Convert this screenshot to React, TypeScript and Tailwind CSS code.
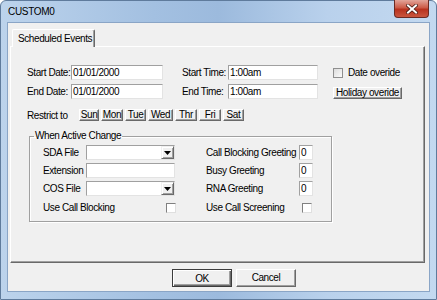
import React from 'react';

// classic Win dialog pieces
function Edit({ className, value }: { className: string; value?: string }) {
  return (
    <div
      className={`${className} h-[15px] shrink-0 bg-white border border-t-[#a0a0a0] border-l-[#a0a0a0] border-r-[#e3e3e3] border-b-[#e3e3e3] pl-[1px] leading-[13px] whitespace-nowrap overflow-hidden`}
    >
      {value}
    </div>
  );
}

function Combo({ className }: { className: string }) {
  return (
    <div
      className={`${className} h-[15px] shrink-0 bg-white border border-t-[#a0a0a0] border-l-[#a0a0a0] border-r-[#e3e3e3] border-b-[#e3e3e3] flex justify-end`}
    >
      <div className="w-[13px] h-full bg-[#f0f0f0] border border-t-[#f0f0f0] border-l-[#f0f0f0] border-r-[#696969] border-b-[#696969] shadow-[inset_1px_1px_0_#fff,inset_-1px_-1px_0_#a0a0a0] flex items-center justify-center">
        <svg width="7" height="4" viewBox="0 0 7 4">
          <path d="M0 0h7L3.5 4z" fill="#000" />
        </svg>
      </div>
    </div>
  );
}

function Check() {
  return (
    <div className="w-[10px] h-[10px] shrink-0 bg-white border border-t-[#808080] border-l-[#808080] border-r-[#dfdfdf] border-b-[#dfdfdf]" />
  );
}

function Btn({ className, children }: { className: string; children: React.ReactNode }) {
  return (
    <div
      className={`${className} shrink-0 flex items-center justify-center bg-[#f0f0f0] border border-t-white border-l-white border-r-[#696969] border-b-[#696969] shadow-[inset_-1px_-1px_0_#a0a0a0] leading-none whitespace-nowrap`}
    >
      {children}
    </div>
  );
}

export default function App() {
  return (
    <div className="w-[437px] h-[300px] flex flex-col rounded-t-[6px] border border-[#5f7b9c] bg-[linear-gradient(to_right,#bcd3ec,#a3c0e1_35%,#9cbadd_50%,#b9d1ec_75%,#c3d9f0)] px-[6px] pb-[7px] text-black font-['Liberation_Sans',Arial,sans-serif]">
      {/* title bar */}
      <div className="h-[21px] flex items-start justify-between shrink-0">
        <div className="ml-[1px] h-full flex items-center text-[10px] tracking-[-0.3px]">CUSTOM0</div>
        <div className="mr-[1px] -mt-px w-[35px] h-[18px] rounded-b-[4px] border border-t-0 border-[#6b2a23] bg-[linear-gradient(to_bottom,#e2a59a,#cc5b48_45%,#b8321f_55%,#c9563f)] flex items-center justify-center">
          <svg width="12" height="10" viewBox="0 0 12 10">
            <path d="M2 1.5l8 7M10 1.5l-8 7" stroke="#4a1a14" strokeWidth="3.6" strokeLinecap="square" />
            <path d="M2 1.5l8 7M10 1.5l-8 7" stroke="#fff" strokeWidth="2" strokeLinecap="square" />
          </svg>
        </div>
      </div>

      {/* client area */}
      <div className="flex-1 flex flex-col border border-[#8aa5c6] bg-[#f0f0f0] text-[10px] leading-[13px] tracking-[-0.4px]">
        {/* tab */}
        <div className="ml-[4px] mt-[6px] w-[83px] h-[18px] -mb-px relative z-10 bg-[#f0f0f0] rounded-t-[2px] border border-b-0 border-t-white border-l-white border-r-[#696969] shadow-[inset_-1px_0_0_#a0a0a0] pl-[5px] flex items-center whitespace-nowrap">
          Scheduled Events
        </div>

        {/* tab panel */}
        <div className="ml-[2px] w-[415px] h-[217px] border border-t-white border-l-white border-r-[#696969] border-b-[#696969] shadow-[inset_-1px_-1px_0_#a0a0a0] pt-[18px] pl-[16px]">
          <div className="h-[15px] flex items-center">
            <span className="w-[44px] shrink-0 whitespace-nowrap">Start Date:</span>
            <Edit className="w-[92px]" value="01/01/2000" />
            <span className="ml-[19px] w-[46px] shrink-0 whitespace-nowrap">Start Time:</span>
            <Edit className="w-[90px]" value="1:00am" />
            <div className="ml-[15px] w-[10px] h-[10px] shrink-0 border border-[#8f8f8f] bg-[linear-gradient(135deg,#dcdcdc,#fbfbfb)]" />
            <span className="ml-[5px] whitespace-nowrap">Date overide</span>
          </div>

          <div className="mt-[4px] h-[15px] flex items-center">
            <span className="w-[44px] shrink-0 whitespace-nowrap">End Date:</span>
            <Edit className="w-[92px]" value="01/01/2000" />
            <span className="ml-[19px] w-[46px] shrink-0 whitespace-nowrap">End Time:</span>
            <Edit className="w-[90px]" value="1:00am" />
            <Btn className="ml-[15px] mt-[3px] w-[69px] h-[12px]">Holiday overide</Btn>
          </div>

          <div className="mt-[10px] h-[12px] flex items-center">
            <span className="w-[52px] shrink-0 whitespace-nowrap">Restrict to</span>
            <div className="flex gap-[2px]">
              <Btn className="w-[20px] h-[12px]">Sun</Btn>
              <Btn className="w-[22px] h-[12px]">Mon</Btn>
              <Btn className="w-[21px] h-[12px]">Tue</Btn>
              <Btn className="w-[25px] h-[12px]">Wed</Btn>
              <Btn className="w-[22px] h-[12px]">Thr</Btn>
              <Btn className="w-[22px] h-[12px]">Fri</Btn>
              <Btn className="w-[21px] h-[12px]">Sat</Btn>
            </div>
          </div>

          {/* group box */}
          <fieldset className="ml-[2px] mt-[9px] w-[303px] border border-[#a0a0a0] shadow-[inset_1px_1px_0_#fff,1px_1px_0_#fff] pb-[6px]">
            <legend className="ml-[4px] px-[1px] leading-[12px]">When Active Change</legend>
            <div className="pl-[13px] mt-[3px] flex flex-col gap-[3px]">
              <div className="h-[15px] flex items-center">
                <span className="w-[43px] shrink-0">SDA File</span>
                <Combo className="w-[89px]" />
                <span className="ml-[31px] w-[93px] shrink-0 whitespace-nowrap">Call Blocking Greeting</span>
                <Edit className="w-[14px]" value="0" />
              </div>
              <div className="h-[15px] flex items-center">
                <span className="w-[43px] shrink-0">Extension</span>
                <Edit className="w-[89px]" />
                <span className="ml-[31px] w-[93px] shrink-0">Busy Greeting</span>
                <Edit className="w-[14px]" value="0" />
              </div>
              <div className="h-[15px] flex items-center">
                <span className="w-[43px] shrink-0">COS File</span>
                <Combo className="w-[89px]" />
                <span className="ml-[31px] w-[93px] shrink-0">RNA Greeting</span>
                <Edit className="w-[14px]" value="0" />
              </div>
              <div className="mt-[1px] h-[15px] flex items-center">
                <span className="w-[123px] shrink-0">Use Call Blocking</span>
                <Check />
                <span className="ml-[30px] w-[96px] shrink-0">Use Call Screening</span>
                <Check />
              </div>
            </div>
          </fieldset>
        </div>

        {/* dialog buttons */}
        <div className="mt-[6px] ml-[164px] flex gap-[4px]">
          <div className="w-[60px] h-[18px] flex items-center justify-center bg-[#f0f0f0] border border-[#3c3c3c] shadow-[inset_1px_1px_0_#fff,inset_-1px_-1px_0_#696969,inset_-2px_-2px_0_#a0a0a0]">
            OK
          </div>
          <Btn className="w-[60px] h-[18px]">Cancel</Btn>
        </div>
      </div>
    </div>
  );
}
